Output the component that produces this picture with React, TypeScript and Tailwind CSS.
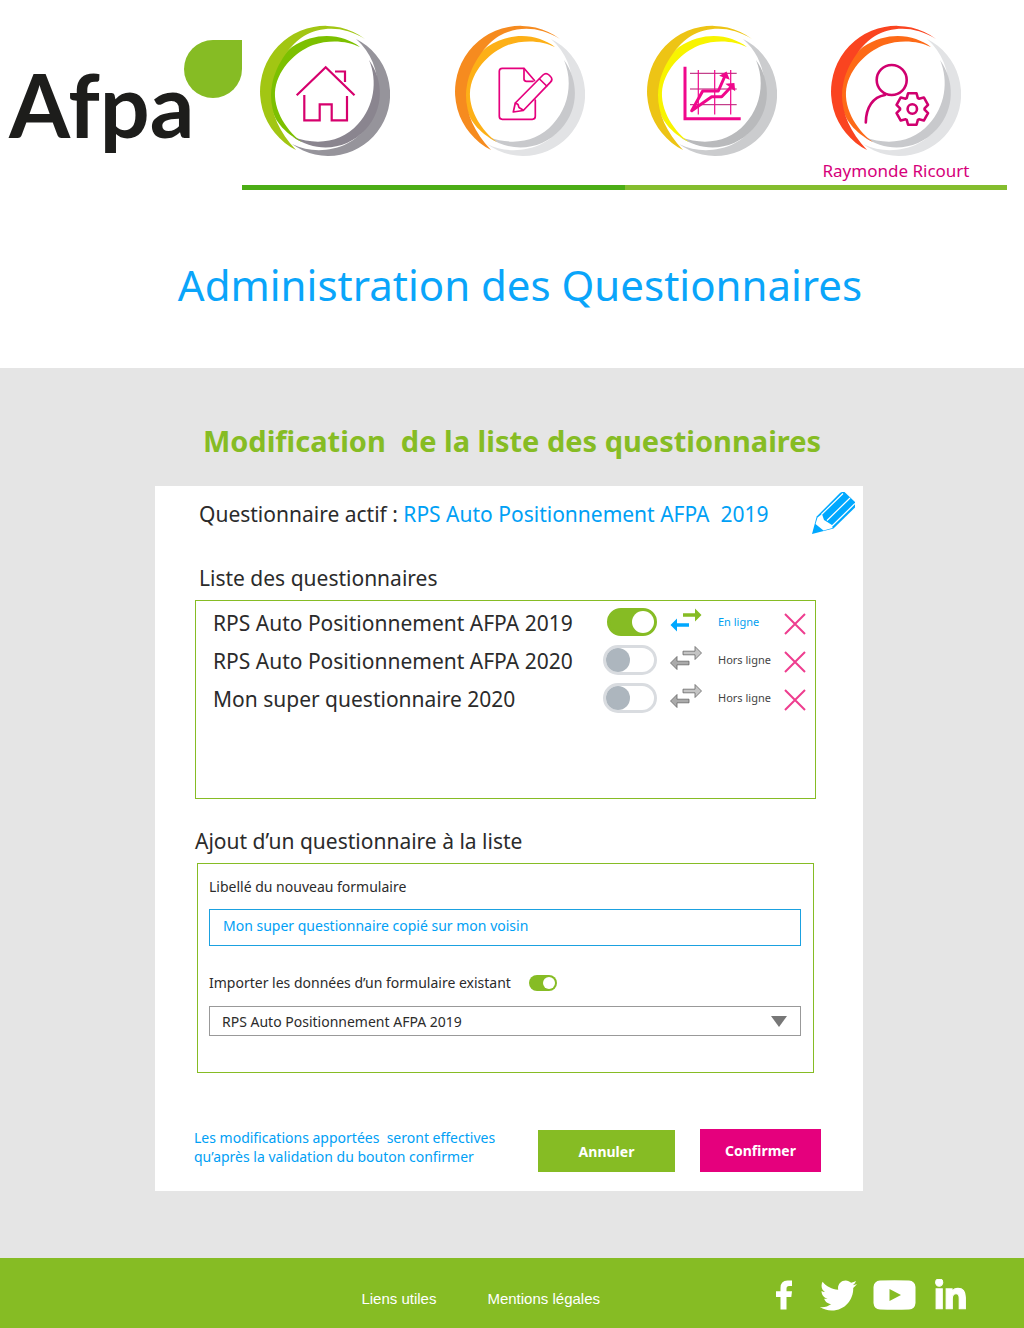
import { useState } from "react";
import type { ReactNode } from "react";
import { FaLinkedinIn, FaTwitter } from "react-icons/fa";

type RingColors = { outer: string; inner: string; shade: string; shadeInner: string };

function Ring({ colors, children }: { colors: RingColors; children: ReactNode }) {
  return (
    <svg viewBox="0 0 130 132" className="block h-[132px] w-[130px]" fill="none" aria-hidden="true">
      <path d="M96 14A61.7 61.7 0 1 1 32 119C58 132 92 124 107 101C122 80 124 38 96 14Z" fill={colors.shade} />
      <path d="M109 35C124 56 124 84 106 104C86 126 56 128 33 112C58 121 82 117 98 99C114 82 118 56 109 35Z" fill={colors.shadeInner} />
      <path d="M100 22C84 10 58 5 32 22C14 36 7 60 11 80C14 98 28 110 42 117C24 104 11 80 16 60C22 38 40 25 53 20C70 14 88 16 100 22Z" fill={colors.inner} />
      <path d="M105 14A65.6 65.6 0 1 0 36 125C16 104 8 80 12 60C16 38 32 18 44 11C62 1 84 1 105 14Z" fill={colors.outer} />
      {children}
    </svg>
  );
}

function HouseDrawing() {
  return (
    <g stroke="#d6006d" strokeWidth="2.2">
      <path d="M36.700 70.300L65.700 42.300L94.500 70.300" />
      <path d="M75 46.500H85V57" />
      <path d="M44.300 70V95.300H59.700V79.300H71.700V95.300H87V71" />
    </g>
  );
}

function FormDrawing() {
  return (
    <g stroke="#e5007d" strokeWidth="1.700" strokeLinejoin="round" strokeLinecap="round">
      <path d="M80.300 75V91.300Q80.300 94.300 77.300 94.300H47.300Q44.300 94.300 44.300 91.300V46.300Q44.300 43.300 47.300 43.300H69L79.500 55.500" />
      <path d="M69 43.500V54Q69 56.300 71.500 56.300H78" />
      <path d="M60.300 78L88 50Q91 47.200 94 50L95.500 51.500Q98.200 54.300 95.500 57.200L68.300 85.500L58.300 87Z" fill="#fff" />
      <path d="M84.500 54L91.700 61M60.500 78L63 79.500L64 82.500L68 85" />
    </g>
  );
}

function ChartDrawing() {
  return (
    <g stroke="#f0078c">
      <path d="M43 48.300H89.700M43 64H89.700M43 79.700H89.700" stroke="#b5126f" strokeWidth="1" />
      <path d="M51.300 45V89.500M67.700 45V89.500M83.700 45V89.500" strokeWidth="1.200" />
      <path d="M38 41.700V93.700H93.700" strokeWidth="3" />
      <path d="M44.700 85.700L55.700 66H71.300L77.500 52M44.700 85.700L64.700 71.700H74.700L84 62" strokeWidth="3" strokeLinejoin="round" strokeLinecap="round" />
      <path d="M74.500 50.500L79 48L81 53ZM81 59.500L86.500 59L87 64Z" fill="#f0078c" strokeWidth="2" />
    </g>
  );
}

const gearPoints = [0, 60, 120, 180, 240, 300]
  .flatMap((angle) => [
    [angle - 27, 12.3],
    [angle - 15, 16.3],
    [angle + 15, 16.3],
    [angle + 27, 12.3],
  ])
  .map(([angle, radius]) => {
    const rad = ((angle - 90) * Math.PI) / 180;
    return `${(81.3 + radius * Math.cos(rad)).toFixed(2)},${(84 + radius * Math.sin(rad)).toFixed(2)}`;
  })
  .join(" ");

function AccountDrawing() {
  return (
    <g stroke="#d0006f" strokeWidth="2.600" strokeLinecap="round" strokeLinejoin="round">
      <circle cx="60.700" cy="55" r="15" />
      <path d="M34.800 97.500C35 82 42 72 54 70" />
      <polygon points={gearPoints} />
      <circle cx="81.300" cy="84" r="4.700" />
    </g>
  );
}

const grey = { shade: "#e2e3e5", shadeInner: "#c8c9cc" };

const navItems = [
  { label: "Accueil", colors: { outer: "#a2c613", inner: "#7cc000", shade: "#96949b", shadeInner: "#8a858f" }, drawing: <HouseDrawing /> },
  { label: "Questionnaires", colors: { outer: "#f68b1f", inner: "#fdb017", ...grey }, drawing: <FormDrawing /> },
  { label: "Statistiques", colors: { outer: "#edc415", inner: "#f8f400", shade: "#cbccce", shadeInner: "#b9babc" }, drawing: <ChartDrawing /> },
  { label: "Mon compte", name: "Raymonde Ricourt", colors: { outer: "#fa4420", inner: "#fd6a17", ...grey }, drawing: <AccountDrawing /> },
];

function Header() {
  return (
    <header className="flex pr-[17px]">
      <a href="#" aria-label="Afpa" className="flex h-[190px] w-[242px] shrink-0 items-start pl-[9px] pt-10">
        <span className="mt-3 w-[175px] font-[Lato] text-[88px] leading-[104px] font-bold text-[#1d1d1b]">Afpa</span>
        <span className="size-[58px] shrink-0 rounded-full rounded-tr-none bg-[#86bc24]" />
      </a>
      <div className="flex h-[190px] flex-1 flex-col justify-between">
        <nav className="grid grid-cols-[195fr_192fr_184fr_176fr] pl-[18px] pt-[25px]">
          {navItems.map((item) => (
            <a key={item.label} href="#" aria-label={item.name ?? item.label} className="flex w-[130px] flex-col items-center">
              <Ring colors={item.colors}>{item.drawing}</Ring>
              {item.name && <span className="text-[17px] leading-7 whitespace-nowrap text-[#d6007a]">{item.name}</span>}
            </a>
          ))}
        </nav>
        <div className="flex h-[5px]">
          <div className="flex-1 bg-[#4bad15]" />
          <div className="flex-1 bg-[#84bd2e]" />
        </div>
      </div>
    </header>
  );
}

function PencilIcon() {
  return (
    <svg viewBox="0 0 43 42" className="h-[42px] w-[43px]" aria-hidden="true">
      <path d="M0 42L4.700 24.500L28 1Q29 0 30.500 0H32.500L43 10V15.500L21.500 36.500Z" fill="#00a8ff" />
      <path d="M5.500 25.500L10 22L12 28L20 33L20.500 36L11.500 38.500L3.500 32Z" fill="#fff" />
      <path d="M9.500 22.500L31 1.500M15 28.500L38 6M20 34L43 11.500" stroke="#fff" strokeWidth="1.200" />
    </svg>
  );
}

function SwapIcon({ active }: { active: boolean }) {
  return (
    <svg viewBox="0 0 33 24" className="mb-1 h-6 w-[33px]" stroke={active ? "none" : "#666"} strokeWidth="0.800" aria-hidden="true">
      <path d="M14 5.200H26V.5L32.500 7L26 13.500V8.800H14Z" fill={active ? "#86bc24" : "#c4c4c4"} />
      <path d="M20 15.200H8V10.500L1.500 17L8 23.500V18.800H20Z" fill={active ? "#00a8ff" : "#aaa"} />
    </svg>
  );
}

type Questionnaire = { title: string; online: boolean };

function QuestionnaireRow({ item, onToggle, onRemove }: { item: Questionnaire; onToggle: () => void; onRemove: () => void }) {
  return (
    <li className="grid h-[38px] grid-cols-[1fr_54px_33px_58px_22px] items-center gap-x-3 pr-[9px] pl-[17px]">
      <span className="pt-1 text-[21px] whitespace-nowrap">{item.title}</span>
      <input
        type="checkbox"
        role="switch"
        aria-label={item.title}
        checked={item.online}
        onChange={onToggle}
        className="relative h-[30px] w-[54px] appearance-none rounded-full border-[3px] border-[#d9dce0] bg-white before:absolute before:top-0 before:left-0 before:size-6 before:rounded-full before:bg-[#adb6be] checked:h-7 checked:w-[50px] checked:justify-self-end checked:border-[#86bc24] checked:bg-[#86bc24] checked:before:left-[22px] checked:before:size-[22px] checked:before:bg-white"
      />
      <SwapIcon active={item.online} />
      <span className={item.online ? "pl-1 text-[11px] whitespace-nowrap text-[#00a0f0]" : "pl-1 text-[11px] whitespace-nowrap text-[#444]"}>
        {item.online ? "En ligne" : "Hors ligne"}
      </span>
      <button type="button" aria-label={`Supprimer ${item.title}`} onClick={onRemove}>
        <svg viewBox="0 0 22 22" className="mt-1 size-[22px]" stroke="#ee3d8f" strokeWidth="2" aria-hidden="true">
          <path d="M1 1L21 21M21 1L1 21" />
        </svg>
      </button>
    </li>
  );
}

const initialList: Questionnaire[] = [
  { title: "RPS Auto Positionnement AFPA 2019", online: true },
  { title: "RPS Auto Positionnement AFPA 2020", online: false },
  { title: "Mon super questionnaire 2020", online: false },
];

function Panel() {
  const [list, setList] = useState(initialList);
  const [name, setName] = useState("Mon super questionnaire copié sur mon voisin");
  return (
    <form className="mx-auto mt-[25px] max-w-[708px] bg-white pr-[42px] pb-[19px] pl-10" onSubmit={(e) => e.preventDefault()}>
      <div className="-mr-[34px] flex items-start justify-between pt-[6px]">
        <p className="pt-1 pl-1 text-[21px] leading-9 whitespace-pre">
          Questionnaire actif : <span className="text-[#00a0f5]">RPS Auto Positionnement AFPA  2019</span>
        </p>
        <button type="button" aria-label="Modifier">
          <PencilIcon />
        </button>
      </div>
      <h3 className="mt-[26px] pl-1 text-[21px] leading-9">Liste des questionnaires</h3>
      <ul className="mr-[5px] mt-1 min-h-[199px] border border-[#86bc24] pt-[2px]">
        {list.map((item, index) => (
          <QuestionnaireRow
            key={item.title}
            item={item}
            onToggle={() => setList(list.map((q, i) => (i === index ? { ...q, online: !q.online } : q)))}
            onRemove={() => setList(list.filter((_, i) => i !== index))}
          />
        ))}
      </ul>
      <h3 className="mt-6 text-[21px] leading-9">Ajout d’un questionnaire à la liste</h3>
      <div className="mr-[7px] ml-[2px] mt-1 border border-[#86bc24] pt-3 pr-3 pb-9 pl-[11px] text-[14px]">
        <label htmlFor="form-name" className="block leading-[22px]">Libellé du nouveau formulaire</label>
        <input
          id="form-name"
          value={name}
          onChange={(e) => setName(e.target.value)}
          className="mt-[11px] block h-[37px] w-full border border-[#1ba1e0] px-[13px] pb-1 text-[#00a0f5]"
        />
        <div className="mt-[26px] flex items-center gap-[18px]">
          <label htmlFor="import-data" className="leading-[22px]">Importer les données d’un formulaire existant</label>
          <input
            id="import-data"
            type="checkbox"
            role="switch"
            defaultChecked
            className="relative h-4 w-7 appearance-none rounded-full bg-[#adb6be] before:absolute before:top-[2px] before:left-[2px] before:size-3 before:rounded-full before:bg-white checked:bg-[#86bc24] checked:before:left-[14px]"
          />
        </div>
        <div className="relative mt-3">
          <select aria-label="Formulaire existant" className="block h-[30px] w-full appearance-none border border-[#999] px-3">
            {initialList.map((item) => (
              <option key={item.title}>{item.title}</option>
            ))}
          </select>
          <svg viewBox="0 0 16 11" className="pointer-events-none absolute top-[10px] right-[14px] h-[11px] w-4" fill="#777" aria-hidden="true">
            <path d="M0 0H16L8 11Z" />
          </svg>
        </div>
      </div>
      <div className="mt-[55px] flex items-end">
        <p className="-ml-px flex-1 self-start text-[14px] leading-[19px] whitespace-pre text-[#00a0f5]">
          {"Les modifications apportées  seront effectives\nqu’après la validation du bouton confirmer"}
        </p>
        <button type="button" className="mt-px h-[42px] w-[137px] bg-[#86bc24] text-[14px] font-bold text-white">Annuler</button>
        <button type="submit" className="mt-px ml-[25px] h-[43px] w-[121px] bg-[#e5007d] text-[14px] font-bold text-white">Confirmer</button>
      </div>
    </form>
  );
}

function Footer() {
  return (
    <footer className="flex h-[70px] items-center justify-end bg-[#86bc24] pt-1 pr-[58px] text-white">
      <div className="mr-[176px] flex gap-[51px] pt-2 font-['Liberation_Sans',sans-serif] text-[15px]">
        <a href="#">Liens utiles</a>
        <a href="#">Mentions légales</a>
      </div>
      <div className="flex items-center">
        <a href="#" aria-label="Facebook">
          <svg viewBox="0 0 16 30" className="h-[30px] w-4" fill="#fff" aria-hidden="true">
            <path d="M4.500 29.500V17H0V11.300H4.500V8Q4.500.5 11.500.5H16V6H13Q10.500 6 10.500 8.500V11.300H16L15.300 17H10.500V29.500Z" />
          </svg>
        </a>
        <a href="#" aria-label="Twitter" className="ml-7"><FaTwitter className="size-[37px]" /></a>
        <a href="#" aria-label="YouTube" className="ml-4">
          <svg viewBox="0 0 43 30" className="h-[30px] w-[43px]" aria-hidden="true">
            <path fillRule="evenodd" fill="#fff" d="M7 .5Q21.500-.2 36 .5Q42 1 42.500 7V23Q42 29 36 29.500Q21.500 30.200 7 29.500Q1 29 .5 23V7Q1 1 7 .5ZM16.500 9V21L28 15Z" />
          </svg>
        </a>
        <a href="#" aria-label="LinkedIn" className="ml-[19px]"><FaLinkedinIn className="mt-px h-[34px] w-[31px]" stroke="currentColor" strokeWidth="16" /></a>
      </div>
    </footer>
  );
}

export default function App() {
  return (
    <div className="bg-white font-['Noto_Sans',sans-serif] text-[#2b2b2b]">
      <Header />
      <h1 className="pt-[63px] pb-[51px] pl-4 text-center text-[42px] leading-[64px] text-[#0aa5fa]">Administration des Questionnaires</h1>
      <main className="bg-[#e5e5e5] pt-[53px] pr-[6px] pb-[67px]">
        <h2 className="pl-[6px] text-center text-[29px] leading-10 font-bold whitespace-pre text-[#86bc24]">Modification  de la liste des questionnaires</h2>
        <Panel />
      </main>
      <Footer />
    </div>
  );
}
